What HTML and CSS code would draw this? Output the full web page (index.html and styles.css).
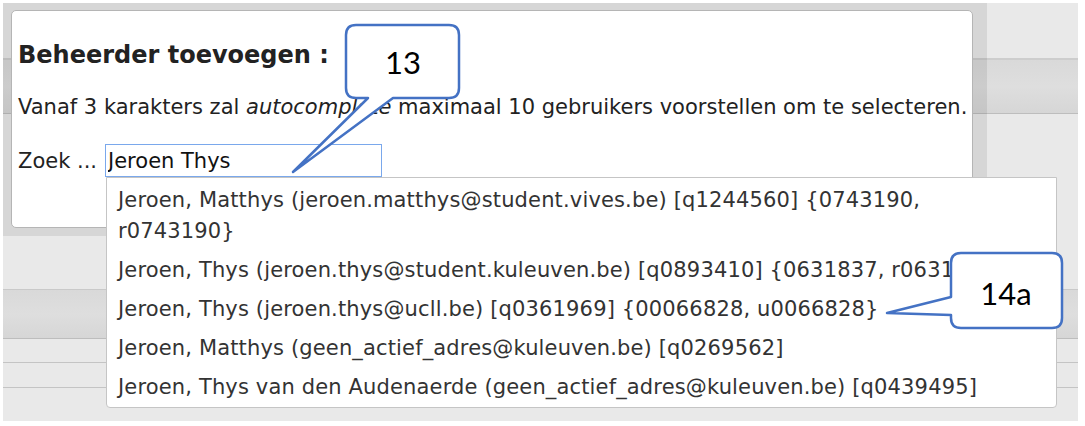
FILE: index.html
```html
<!DOCTYPE html>
<html lang="nl">
<head>
  <meta charset="UTF-8">
  <title>Beheerder toevoegen</title>
  <link rel="stylesheet" href="styles.css">
</head>
<body>
  <div class="screen">
    <!-- page behind the dialog -->
    <div class="bg-row top"></div>
    <div class="bg-row band"></div>
    <div class="bg-row mid"></div>
    <div class="bg-row band low"></div>
    <div class="bg-row thin"></div>
    <div class="bg-row thin"></div>
    <div class="bg-row rest"></div>

    <!-- Dialog -->
    <div class="dialog-frame">
      <div class="dialog">
        <h2>Beheerder toevoegen :</h2>
        <p>Vanaf 3 karakters zal <em>autocomplete</em> maximaal 10 gebruikers voorstellen om te selecteren.</p>
        <div class="search-row">
          <label for="zoek">Zoek ...</label>
          <div class="search-box">
            <input id="zoek" type="text" value="Jeroen Thys">
            <ul class="suggestions">
              <li>Jeroen, Matthys (jeroen.matthys@student.vives.be) [q1244560] {0743190,<br>r0743190}</li>
              <li>Jeroen, Thys (jeroen.thys@student.kuleuven.be) [q0893410] {0631837, r0631837}</li>
              <li>Jeroen, Thys (jeroen.thys@ucll.be) [q0361969] {00066828, u0066828}</li>
              <li>Jeroen, Matthys (geen_actief_adres@kuleuven.be) [q0269562]</li>
              <li>Jeroen, Thys van den Audenaerde (geen_actief_adres@kuleuven.be) [q0439495]</li>
            </ul>
          </div>
        </div>
      </div>
    </div>

    <!-- annotation callouts -->
    <svg class="callouts" width="1085" height="426" viewBox="0 0 1085 426">
      <path class="bubble" d="M356 25 H449 Q459 25 459 35 V88 Q459 98 449 98 H393 L293 172 L368 98 H356 Q346 98 346 88 V35 Q346 25 356 25 Z"/>
      <text x="403" y="74" text-anchor="middle">13</text>
      <path class="bubble" d="M961 253 H1052 Q1062 253 1062 263 V318 Q1062 328 1052 328 H961 Q951 328 951 318 V315 L887 313 L951 297 V263 Q951 253 961 253 Z"/>
      <text x="1006" y="305" text-anchor="middle">14a</text>
    </svg>
  </div>
</body>
</html>
```

FILE: styles.css
```css
/* Base */
html, body {
  margin: 0;
  padding: 0;
  background: #fff;
}

body {
  font-family: "DejaVu Sans", Verdana, sans-serif;
  color: #222;
}

.screen {
  position: relative;
  width: 1075px;
  height: 418px;
  margin: 3px 0 0 3px;
  background: #e9e9e9;
  overflow: hidden;
}

/* Background rows of the page behind */
.bg-row {
  box-sizing: border-box;
}

.bg-row.top {
  height: 57px;
  border-bottom: 2px solid #cdcdcd;
}

.bg-row.band {
  height: 54px;
  background: linear-gradient(to bottom, #d9d9d9, #dedede 50%, #d6d6d6);
  border-bottom: 1px solid #bdbdbd;
}

.bg-row.mid {
  height: 175px;
}

.bg-row.band.low {
  height: 50px;
  border-top: 1px solid #c9c9c9;
}

.bg-row.thin {
  height: 24px;
  border-bottom: 1px solid #c4c4c4;
}

.bg-row.thin + .thin {
  height: 25px;
}

.bg-row.rest {
  height: 40px;
}

/* Dialog */
.dialog-frame {
  position: absolute;
  left: 0;
  top: 0;
  width: 984px;
  height: 233px;
  box-sizing: border-box;
  padding: 7px 14px 8px 8px;
  background: rgba(0, 0, 0, 0.08);
}

.dialog {
  height: 100%;
  box-sizing: border-box;
  padding: 30px 0 0 6px;
  background: #fff;
  border: 1px solid #b5b5b5;
  border-radius: 5px;
}

.dialog h2 {
  margin: 0;
  font-size: 24px;
  line-height: 28px;
  font-weight: bold;
  color: #222;
}

.dialog p {
  margin: 26px 0 0;
  font-size: 21px;
  line-height: 24px;
  color: #222;
  white-space: nowrap;
}

.search-row {
  display: flex;
  align-items: baseline;
  margin-top: 25px;
  font-size: 21px;
}

.search-row label {
  width: 87px;
  line-height: 24px;
}

.search-box {
  position: relative;
}

.search-box input {
  width: 277px;
  height: 33px;
  box-sizing: border-box;
  padding: 4px 2px 3px;
  margin: 0;
  font-family: inherit;
  font-size: 21px;
  line-height: 24px;
  color: #111;
  border: 1px solid #7aa8ec;
  outline: none;
  background: #fff;
}

/* Autocomplete list */
.suggestions {
  position: absolute;
  left: 1px;
  top: 33px;
  width: 951px;
  box-sizing: border-box;
  margin: 0;
  padding: 3px 0 0;
  list-style: none;
  background: #fff;
  border: 1px solid #c5c5c5;
  border-radius: 0 0 4px 4px;
  z-index: 2;
}

.suggestions li {
  padding: 4px 11px;
  font-size: 21px;
  line-height: 31px;
  letter-spacing: 0.15px;
  color: #333;
  white-space: nowrap;
}

/* Callouts */
.callouts {
  position: absolute;
  left: -3px;
  top: -3px;
  z-index: 5;
}

.callouts .bubble {
  fill: #fff;
  stroke: #4472c4;
  stroke-width: 2.5;
  stroke-linejoin: round;
}

.callouts text {
  font-family: Lato, "Open Sans", sans-serif;
  font-size: 31px;
  fill: #000;
}
```
